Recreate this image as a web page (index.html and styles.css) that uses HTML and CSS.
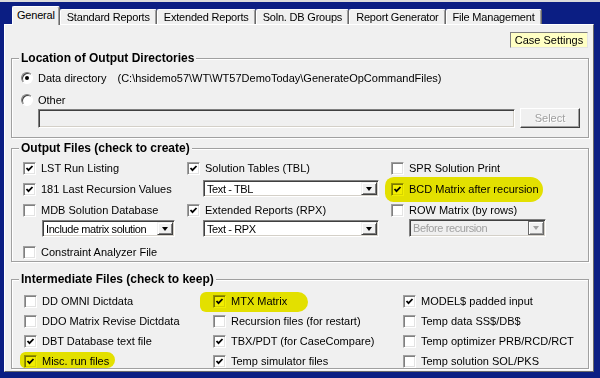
FILE: index.html
```html
<!DOCTYPE html>
<html lang="en">

<head>
    <meta charset="UTF-8">
    <title>Case Settings</title>
    <link rel="stylesheet" href="styles.css">
</head>

<body>
    <div class="frame">
        <ul class="tabs">
            <li class="tab active">General</li>
            <li class="tab">Standard Reports</li>
            <li class="tab">Extended Reports</li>
            <li class="tab">Soln. DB Groups</li>
            <li class="tab">Report Generator</li>
            <li class="tab">File Management</li>
        </ul>

        <div class="panel">
            <div class="toolbar">
                <button class="case-btn">Case Settings</button>
            </div>

            <!-- output directories -->
            <fieldset class="group">
                <legend>Location of Output Directories</legend>
                <div class="dirs-body">
                    <div class="opt"><span class="radio on"></span>Data directory<span class="path">(C:\hsidemo57\WT\WT57DemoToday\GenerateOpCommandFiles)</span></div>
                    <div class="opt"><span class="radio"></span>Other</div>
                    <div class="other-row">
                        <div class="field"></div>
                        <button class="btn" disabled>Select</button>
                    </div>
                </div>
            </fieldset>

            <!-- output files -->
            <fieldset class="group out">
                <legend>Output Files (check to create)</legend>
                <div class="out-body">
                    <div class="col">
                        <div class="chk"><span class="box on"><svg viewBox="0 0 9 9"><path d="M1.5 4 L3.5 6.2 L7.5 2" /></svg></span>LST Run Listing</div>
                        <div class="chk"><span class="box on"><svg viewBox="0 0 9 9"><path d="M1.5 4 L3.5 6.2 L7.5 2" /></svg></span>181 Last Recursion Values</div>
                        <div class="chk"><span class="box"></span>MDB Solution Database</div>
                        <div class="combo c1"><span class="val">Include matrix solution</span><span class="arrow"></span></div>
                        <div class="chk last"><span class="box"></span>Constraint Analyzer File</div>
                    </div>
                    <div class="col">
                        <div class="chk"><span class="box on"><svg viewBox="0 0 9 9"><path d="M1.5 4 L3.5 6.2 L7.5 2" /></svg></span>Solution Tables (TBL)</div>
                        <div class="combo c2 first"><span class="val">Text - TBL</span><span class="arrow"></span></div>
                        <div class="chk"><span class="box on"><svg viewBox="0 0 9 9"><path d="M1.5 4 L3.5 6.2 L7.5 2" /></svg></span>Extended Reports (RPX)</div>
                        <div class="combo c2"><span class="val">Text - RPX</span><span class="arrow"></span></div>
                    </div>
                    <div class="col">
                        <div class="chk"><span class="box"></span>SPR Solution Print</div>
                        <div class="chk"><span class="box on"><svg viewBox="0 0 9 9"><path d="M1.5 4 L3.5 6.2 L7.5 2" /></svg></span>BCD Matrix after recursion<span class="hl hl-bcd"></span></div>
                        <div class="chk"><span class="box"></span>ROW Matrix (by rows)</div>
                        <div class="combo c3 off"><span class="val">Before recursion</span><span class="arrow"></span></div>
                    </div>
                </div>
            </fieldset>

            <!-- intermediate files -->
            <fieldset class="group inter">
                <legend>Intermediate Files (check to keep)</legend>
                <div class="inter-body">
                    <div class="col">
                        <div class="chk"><span class="box"></span>DD OMNI Dictdata</div>
                        <div class="chk"><span class="box"></span>DDO Matrix Revise Dictdata</div>
                        <div class="chk"><span class="box on"><svg viewBox="0 0 9 9"><path d="M1.5 4 L3.5 6.2 L7.5 2" /></svg></span>DBT Database text file</div>
                        <div class="chk"><span class="box on"><svg viewBox="0 0 9 9"><path d="M1.5 4 L3.5 6.2 L7.5 2" /></svg></span>Misc. run files<span class="hl hl-misc"></span></div>
                    </div>
                    <div class="col">
                        <div class="chk"><span class="box on"><svg viewBox="0 0 9 9"><path d="M1.5 4 L3.5 6.2 L7.5 2" /></svg></span>MTX Matrix<span class="hl hl-mtx"></span></div>
                        <div class="chk"><span class="box"></span>Recursion files (for restart)</div>
                        <div class="chk"><span class="box on"><svg viewBox="0 0 9 9"><path d="M1.5 4 L3.5 6.2 L7.5 2" /></svg></span>TBX/PDT (for CaseCompare)</div>
                        <div class="chk"><span class="box on"><svg viewBox="0 0 9 9"><path d="M1.5 4 L3.5 6.2 L7.5 2" /></svg></span>Temp simulator files</div>
                    </div>
                    <div class="col">
                        <div class="chk"><span class="box on"><svg viewBox="0 0 9 9"><path d="M1.5 4 L3.5 6.2 L7.5 2" /></svg></span>MODEL$ padded input</div>
                        <div class="chk"><span class="box"></span>Temp data SS$/DB$</div>
                        <div class="chk"><span class="box"></span>Temp optimizer PRB/RCD/RCT</div>
                        <div class="chk"><span class="box"></span>Temp solution SOL/PKS</div>
                    </div>
                </div>
            </fieldset>
        </div>
    </div>
</body>

</html>
```

FILE: styles.css
```css
* {
    margin: 0;
    padding: 0;
    box-sizing: border-box;
}

body {
    width: 600px;
    height: 378px;
    overflow: hidden;
    background: #0b1e83;
    font: 11px "Liberation Sans", Arial, sans-serif;
    color: #000;
}

.frame {
    height: 378px;
    border-top: 2px solid #dcdcdc;
}

/* tabs */
.tabs {
    display: flex;
    align-items: flex-end;
    height: 22px;
    padding-left: 12px;
    list-style: none;
    letter-spacing: -0.2px;
}

.tab {
    height: 15px;
    line-height: 14px;
    padding: 0 6px;
    background: #f0f0f0;
    border-top: 1px solid #fff;
    border-left: 1px solid #fff;
    border-right: 1px solid #696969;
    box-shadow: inset -1px 0 #a0a0a0;
    border-radius: 2px 2px 0 0;
    white-space: nowrap;
}

.tab.active {
    height: 19px;
    line-height: 17px;
    margin-bottom: -1px;
    padding: 0 4px;
    position: relative;
    z-index: 1;
}

/* panel */
.panel {
    height: 348px;
    margin: 0 6px 0 4px;
    padding: 0 4px 0 6px;
    background: #f0f0f0;
    border: 1px solid;
    border-color: #fff #696969 #696969 #fff;
    overflow: hidden;
}

.toolbar {
    display: flex;
    justify-content: flex-end;
    padding: 7px 1px 0 0;
}

.case-btn {
    width: 78px;
    height: 16px;
    font: inherit;
    line-height: 14px;
    background: #ffffc4;
    border: 1px solid;
    border-color: #808080 #e4e4e4 #e4e4e4 #808080;
}

/* group boxes */
.group {
    min-width: 0;
    margin-top: 3px;
    border: 1px solid #a0a0a0;
    box-shadow: 1px 1px 0 #fff, inset 1px 1px 0 #fff;
}

.group legend {
    margin-left: 7px;
    padding: 0 2px;
    font-size: 12px;
    font-weight: bold;
    line-height: 14px;
    background: #f0f0f0;
}

.group.inter {
    margin-top: 10px;
}

.dirs-body {
    padding: 5px 8px 9px 9px;
}

.opt {
    display: flex;
    align-items: center;
    gap: 5px;
    height: 16px;
    white-space: nowrap;
}

.opt+.opt {
    margin-top: 6px;
}

.path {
    margin-left: 6px;
}

.radio {
    width: 12px;
    height: 12px;
    flex: none;
    position: relative;
    border-radius: 50%;
    border: 1px solid;
    border-color: #808080 #fff #fff #808080;
    background: #fff;
    box-shadow: inset 1px 1px 0 #404040;
}

.radio.on::after {
    content: '';
    position: absolute;
    left: 3px;
    top: 3px;
    width: 4px;
    height: 4px;
    border-radius: 50%;
    background: #000;
}

.other-row {
    display: flex;
    align-items: flex-end;
    gap: 5px;
    height: 20px;
    margin-left: 17px;
}

.field {
    flex: 1;
    height: 19px;
    background: #f0f0f0;
    border: 1px solid;
    border-color: #808080 #fff #fff #808080;
    box-shadow: inset 1px 1px 0 #404040, inset -1px -1px 0 #d4d0c8;
}

.btn {
    width: 60px;
    height: 20px;
    font: inherit;
    color: #a0a0a0;
    text-shadow: 1px 1px 0 #fff;
    background: #f0f0f0;
    border: 1px solid;
    border-color: #fff #404040 #404040 #fff;
    box-shadow: inset -1px -1px 0 #a0a0a0;
}

/* check columns */
.out-body {
    display: grid;
    grid-template-columns: 164px 204px 1fr;
    padding: 5px 0 1px 11px;
}

.inter-body {
    display: grid;
    grid-template-columns: 189px 190px 1fr;
    padding: 8px 0 0 12px;
}

.col {
    display: flex;
    flex-direction: column;
    gap: 5px;
}

.inter-body .col {
    gap: 6px;
}

.chk {
    display: flex;
    align-items: center;
    gap: 5px;
    height: 16px;
    position: relative;
    white-space: nowrap;
}

.inter-body .chk {
    height: 14px;
}

.chk.last {
    margin-top: 2px;
}

.box {
    width: 13px;
    height: 13px;
    flex: none;
    display: flex;
    align-items: center;
    justify-content: center;
    background: #fff;
    border: 1px solid;
    border-color: #a0a0a0 #fff #fff #a0a0a0;
    box-shadow: inset 1px 1px 0 #808080, inset -1px -1px 0 #e3e3e3;
}

.box svg {
    width: 9px;
    height: 9px;
    fill: none;
    stroke: #000;
    stroke-width: 1.8;
}

/* combos */
.combo {
    display: flex;
    align-items: center;
    height: 17px;
    margin-top: -3px;
    padding: 1px;
    background: #fff;
    border: 1px solid;
    border-color: #808080 #fff #fff #808080;
    box-shadow: inset 1px 1px 0 #404040, inset -1px -1px 0 #d4d0c8;
}

.combo .val {
    flex: 1;
    min-width: 0;
    padding-left: 2px;
    letter-spacing: -0.4px;
    overflow: hidden;
    white-space: nowrap;
}

.combo .arrow {
    width: 16px;
    height: 100%;
    flex: none;
    display: flex;
    align-items: center;
    justify-content: center;
    background: #f0f0f0;
    border: 1px solid;
    border-color: #f0f0f0 #404040 #404040 #f0f0f0;
    box-shadow: inset 1px 1px 0 #fff, inset -1px -1px 0 #808080;
}

.combo .arrow::after {
    content: '';
    border-left: 3.5px solid transparent;
    border-right: 3.5px solid transparent;
    border-top: 4px solid #000;
}

.combo.c1 {
    width: 133px;
    margin-left: 19px;
}

.combo.c2 {
    width: 176px;
    margin-left: 16px;
}

.combo.c2.first {
    margin-top: -1px;
}

.combo.c3 {
    width: 137px;
    height: 18px;
    margin-left: 18px;
    margin-top: -4px;
}

.combo.off {
    background: #f0f0f0;
    color: #a0a0a0;
}

.combo.off .arrow {
    border-color: #696969;
    box-shadow: inset 1px 1px 0 #fff, inset -1px -1px 0 #a0a0a0;
}

.combo.off .arrow::after {
    border-top-color: #a0a0a0;
}

/* marker highlights drawn over the text */
.hl {
    position: absolute;
    background: #f2ee00;
    mix-blend-mode: multiply;
    pointer-events: none;
}

.hl-bcd {
    left: -6px;
    top: -4px;
    width: 158px;
    height: 25px;
    border-radius: 9px 13px 13px 9px;
}

.hl-mtx {
    left: -13px;
    top: -2px;
    width: 108px;
    height: 20px;
    border-radius: 6px 10px 10px 6px;
}

.hl-misc {
    left: -4px;
    top: -2px;
    width: 95px;
    height: 16px;
    border-radius: 6px 9px 9px 6px;
}
```
